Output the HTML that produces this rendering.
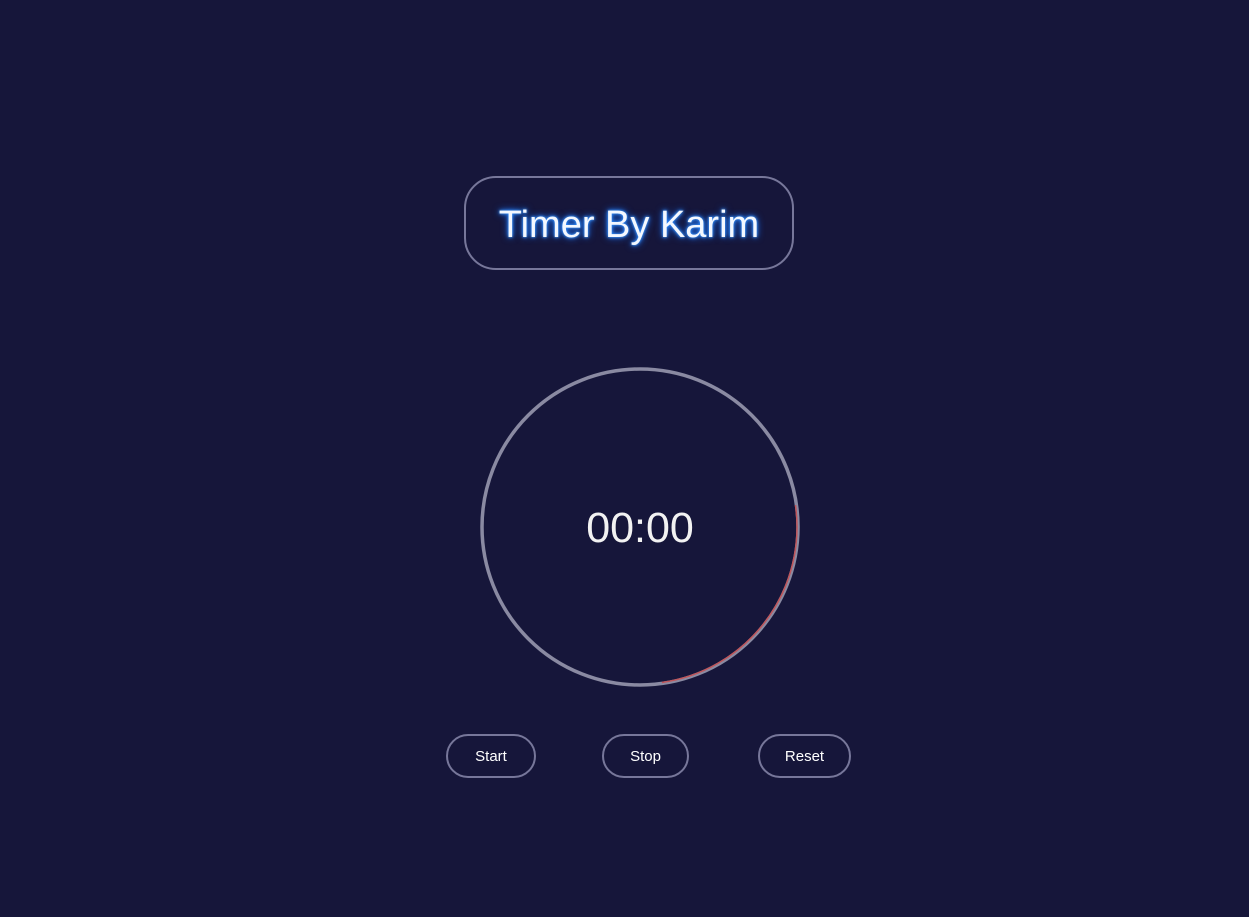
<!DOCTYPE html>
<html><head><style>
html,body{margin:0;padding:0;width:1249px;height:917px;background:#16163a;overflow:hidden;font-family:"Liberation Sans",sans-serif;color:#fff}
.title{position:absolute;left:464px;top:176px;width:326px;height:90px;border:2px solid #77779a;border-radius:32px;display:flex;align-items:center;justify-content:center;font-size:38px;color:#f4f8ff;text-shadow:0 0 4px #2a8cff,0 0 8px #1a6fff,0 0 2px #6fb8ff;padding-top:5px;box-sizing:content-box;height:85px}
.ring{position:absolute;left:0;top:0}
.time{position:absolute;left:540px;top:504px;width:200px;text-align:center;font-size:43px;color:#f2f2f2}
.btn{position:absolute;top:734px;height:40px;border:2px solid #77779a;border-radius:22px;font-size:15px;display:flex;align-items:center;justify-content:center;color:#fff}
</style></head><body>
<div class="title">Timer By Karim</div>
<svg class="ring" width="1249" height="917">
<circle cx="640" cy="527" r="158" fill="none" stroke="#8a8aa2" stroke-width="3.5"/>
<path d="M797 527 A157 157 0 0 1 640 684" fill="none" stroke="#c0555a" stroke-width="1.5" transform="rotate(-8 640 527)"/>
</svg>
<div class="time">00:00</div>
<div class="btn" style="left:446px;width:86px">Start</div>
<div class="btn" style="left:602px;width:83px">Stop</div>
<div class="btn" style="left:758px;width:89px">Reset</div>
</body></html>
